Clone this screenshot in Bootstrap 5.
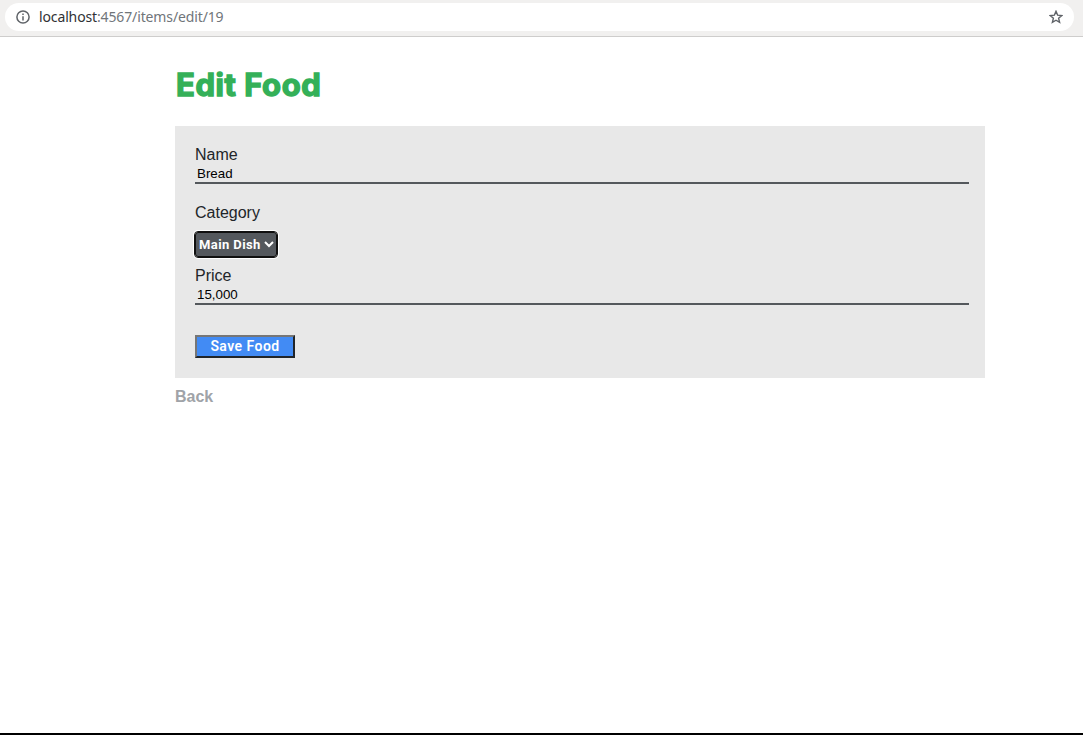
<!DOCTYPE html>
<html lang="en">
<head>
<meta charset="utf-8">
<title>Edit Food</title>
<link href="https://cdn.jsdelivr.net/npm/bootstrap@5.3.0/dist/css/bootstrap.min.css" rel="stylesheet">
<style>
body{font-family:"Liberation Sans",sans-serif;font-size:16px;line-height:24px;color:#212529;height:735px;overflow:hidden;border-bottom:2px solid #000}
.browser-bar{height:37px;background:#f1f0ef;border-bottom:1px solid #cecdcc;padding:3px 9px 5px 5px}
.address{height:28px;border-radius:14px;font:14px/28px "Noto Sans",sans-serif;color:#70757a;padding:0 11px 0 11px}
.url{letter-spacing:-.13px;margin-left:9px}
.url span{color:#303134}
.page{width:810px;margin-left:175px}
.page-title{font:700 31px/40px Inter,sans-serif;color:#34b058;-webkit-text-stroke:1.4px #34b058;stroke-linejoin:round;height:40px;margin:28px 0 21px;padding-left:1px;letter-spacing:.55px;white-space:nowrap}
.food-form{background:#e8e8e8;height:252px;padding:17px 16px 20px 20px}
.line-input{display:block;width:100%;height:17px;padding:0 2px 3px;border:0;border-bottom:2px solid #54585c;background:transparent;font:13.333px/12px "Liberation Sans",sans-serif;color:#000;outline:0}
.category-label{margin-top:17px}
.category{width:82px;height:25px;margin:7px 0 6px;padding:0 2px 0 3px;border:1px solid #101010;border-radius:3px;outline:1px solid #101010;outline-offset:0;box-shadow:0 0 0 2px #fff;background:#54585d;color:#fff;font:700 13px/22px Roboto,sans-serif;letter-spacing:.4px}
.price-label{margin-top:7px}
.save{display:block;width:100px;height:23px;margin-top:30px;padding:0 0 1px;border:2px solid;border-color:#767676 #212529 #212529 #767676;background:#428bf4;color:#fff;font:600 14px/18px Roboto,sans-serif;letter-spacing:.45px}
.back{color:#a0a3a8;margin-top:7px}
</style>
</head>
<body>
<header class="browser-bar">
 <div class="address bg-white d-flex align-items-center">
  <svg width="14" height="14" viewBox="0 0 14 14" fill="none" stroke="#5f6368" stroke-width="1.5"><circle cx="7" cy="7" r="6.1"/><path d="M7 6.2v4.2M7 3.4v1.5"/></svg>
  <div class="url"><span>localhost</span>:4567/items/edit/19</div>
  <svg class="ms-auto" width="14" height="14" viewBox="0 0 14 14" fill="none" stroke="#5f6368" stroke-width="1.4"><path d="M7 1.3 8.6 5.1 12.8 5.5 9.6 8.2 10.6 12.4 7 10.2 3.4 12.4 4.4 8.2 1.2 5.5 5.4 5.1Z"/></svg>
 </div>
</header>
<main class="page">
 <h1 class="page-title">Edit Food</h1>
 <form class="food-form">
  <label class="d-block" for="name">Name</label>
  <input id="name" class="line-input" value="Bread">
  <label class="d-block category-label">Category</label>
  <div class="category d-flex align-items-center justify-content-between text-nowrap" tabindex="0" role="combobox">
   <span>Main Dish</span>
   <svg width="10" height="7" viewBox="0 0 10 7" fill="none" stroke="#fff" stroke-width="2"><path d="m1 1 4 4 4-4"/></svg>
  </div>
  <label class="d-block price-label" for="price">Price</label>
  <input id="price" class="line-input" value="15,000">
  <button type="button" class="save">Save Food</button>
 </form>
 <a class="back d-inline-block fw-bold text-decoration-none" href="#">Back</a>
</main>
<script src="https://cdn.jsdelivr.net/npm/bootstrap@5.3.0/dist/js/bootstrap.bundle.min.js"></script>
</body>
</html>
